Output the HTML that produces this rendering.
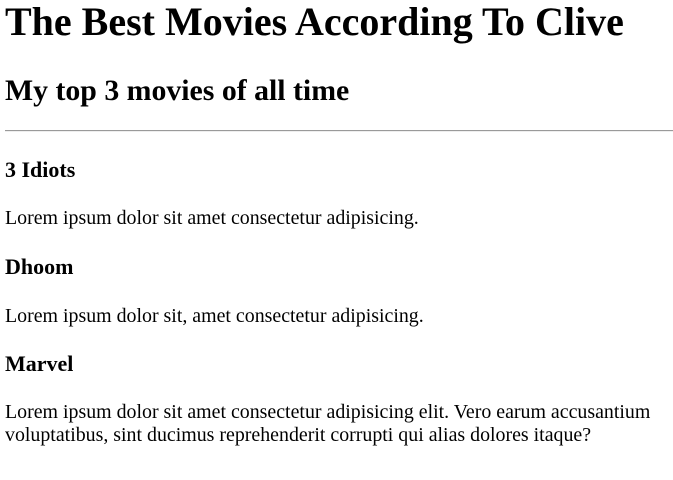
<!DOCTYPE html>
<html><head><style>
body{margin:0;width:673px;height:480px;overflow:hidden;background:#fff;font-family:"Liberation Serif",serif;color:#000}
.a{position:absolute;left:5px;margin:0;white-space:nowrap;line-height:1}
h1{font-size:40px}
h2{font-size:29.8px}
h3{font-size:22px}
p.a{font-size:19.9px;line-height:20px}
hr{position:absolute;left:5px;top:130px;width:668px;margin:0;border:0;border-top:1px solid #9a9a9a;border-bottom:1px solid #eee;height:0}
</style></head><body>
<h1 class="a" style="top:1.5px">The Best Movies According To Clive</h1>
<h2 class="a" style="top:76px">My top 3 movies of all time</h2>
<hr>
<h3 class="a" style="top:158.6px">3 Idiots</h3>
<p class="a" style="top:208.3px">Lorem ipsum dolor sit amet consectetur adipisicing.</p>
<h3 class="a" style="top:255.6px">Dhoom</h3>
<p class="a" style="top:306.3px">Lorem ipsum dolor sit, amet consectetur adipisicing.</p>
<h3 class="a" style="top:352.6px">Marvel</h3>
<p class="a" style="top:400.8px;line-height:23px">Lorem ipsum dolor sit amet consectetur adipisicing elit. Vero earum accusantium<br>voluptatibus, sint ducimus reprehenderit corrupti qui alias dolores itaque?</p>
</body></html>
